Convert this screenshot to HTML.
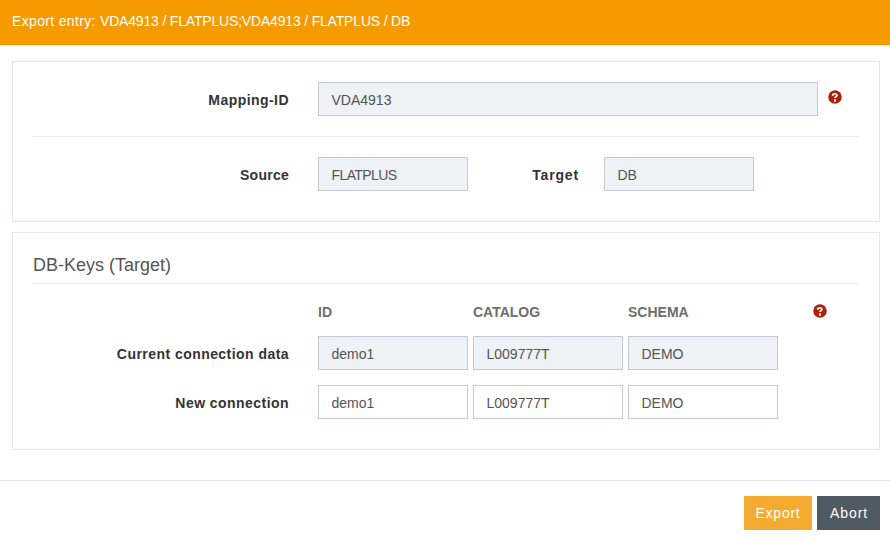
<!DOCTYPE html>
<html><head><meta charset="utf-8">
<style>
*{box-sizing:border-box;margin:0;padding:0}
html,body{width:890px;height:540px;overflow:hidden;background:#fff;font-family:"Liberation Sans",sans-serif;color:#333}
.abs{position:absolute}
#hdr{position:absolute;left:0;top:0;width:890px;height:45px;background:#f59b00}
#hdr span{position:absolute;left:12px;top:13px;font-size:14px;letter-spacing:-0.18px;color:#fff;white-space:nowrap}
.panel{position:absolute;left:12px;width:868px;border:1px solid #e3e8ef;background:#fff}
.lbl{position:absolute;font-weight:bold;font-size:14px;letter-spacing:0.45px;color:#333;white-space:nowrap;text-align:right}
.inp{position:absolute;height:34px;border:1px solid #c2cad8;background:#eef1f6;font-size:14px;color:#555;padding-left:12.5px;line-height:34px;white-space:nowrap}
.inp.w{background:#fff}
.hr{position:absolute;height:1px;background:#ebebeb}
.help{position:absolute;width:14px;height:14px}
.col{position:absolute;font-weight:bold;font-size:14px;color:#6e6e6e;white-space:nowrap}
.btn{position:absolute;height:34px;font-size:14px;letter-spacing:0.75px;color:#fff;line-height:34px;text-align:center}
</style></head><body>
<div class="abs" style="left:0;top:45px;width:890px;height:1px;background:#f1f4f8"></div>
<div id="hdr"><span><i style="font-style:normal;letter-spacing:0.34px">Export entry: </i>VDA4913 / FLATPLUS;VDA4913 / FLATPLUS / DB</span></div>

<div class="panel" style="top:61px;height:161px"></div>
<div class="lbl" style="right:601px;top:92px">Mapping-ID</div>
<div class="inp" style="left:318px;top:82px;width:500px">VDA4913</div>
<svg class="help" style="left:828.2px;top:89.8px" viewBox="0 0 14 14"><circle cx="7" cy="7" r="6.75" fill="#ad210b"/><path fill="#fff" d="M3.7 5.5 C3.9 3.8 5.1 3.0 6.9 3.0 C8.6 3.0 9.8 4.0 9.8 5.3 C9.8 6.5 9.0 7.0 8.3 7.4 C7.9 7.7 7.8 7.9 7.8 8.1 H6.0 C6.0 7.3 6.4 6.9 7.1 6.5 C7.7 6.2 7.9 5.9 7.9 5.5 C7.9 5.0 7.5 4.6 6.9 4.6 C6.3 4.6 5.8 5.0 5.5 5.9 Z"/><rect x="6.0" y="9.3" width="1.8" height="2.5" fill="#fff"/></svg>
<div class="hr" style="left:33px;top:136px;width:826px"></div>
<div class="lbl" style="right:601px;top:167px;letter-spacing:0.25px">Source</div>
<div class="inp" style="left:318px;top:157px;width:150px;letter-spacing:-0.6px">FLATPLUS</div>
<div class="lbl" style="right:311px;top:167px;letter-spacing:0.85px">Target</div>
<div class="inp" style="left:604px;top:157px;width:150px">DB</div>

<div class="panel" style="top:232px;height:218px"></div>
<div class="abs" style="left:33px;top:255px;font-size:18px;color:#555;white-space:nowrap">DB-Keys (Target)</div>
<div class="hr" style="left:33px;top:283px;width:826px;background:#eceff5"></div>
<div class="col" style="left:318px;top:304px">ID</div>
<div class="col" style="left:473px;top:304px">CATALOG</div>
<div class="col" style="left:628px;top:304px">SCHEMA</div>
<svg class="help" style="left:813.2px;top:304px" viewBox="0 0 14 14"><circle cx="7" cy="7" r="6.75" fill="#ad210b"/><path fill="#fff" d="M3.7 5.5 C3.9 3.8 5.1 3.0 6.9 3.0 C8.6 3.0 9.8 4.0 9.8 5.3 C9.8 6.5 9.0 7.0 8.3 7.4 C7.9 7.7 7.8 7.9 7.8 8.1 H6.0 C6.0 7.3 6.4 6.9 7.1 6.5 C7.7 6.2 7.9 5.9 7.9 5.5 C7.9 5.0 7.5 4.6 6.9 4.6 C6.3 4.6 5.8 5.0 5.5 5.9 Z"/><rect x="6.0" y="9.3" width="1.8" height="2.5" fill="#fff"/></svg>
<div class="lbl" style="right:601px;top:346px">Current connection data</div>
<div class="inp" style="left:318px;top:336px;width:150px">demo1</div>
<div class="inp" style="left:473px;top:336px;width:150px">L009777T</div>
<div class="inp" style="left:628px;top:336px;width:150px">DEMO</div>
<div class="lbl" style="right:601px;top:395px">New connection</div>
<div class="inp w" style="left:318px;top:385px;width:150px">demo1</div>
<div class="inp w" style="left:473px;top:385px;width:150px">L009777T</div>
<div class="inp w" style="left:628px;top:385px;width:150px">DEMO</div>

<div class="hr" style="left:0;top:480px;width:890px;background:#e5e5e5"></div>
<div class="btn" style="left:744px;top:496px;width:68px;background:#f4ab30">Export</div>
<div class="btn" style="left:817px;top:496px;width:63px;background:#505a63;letter-spacing:0.9px;text-indent:1px">Abort</div>
</body></html>
